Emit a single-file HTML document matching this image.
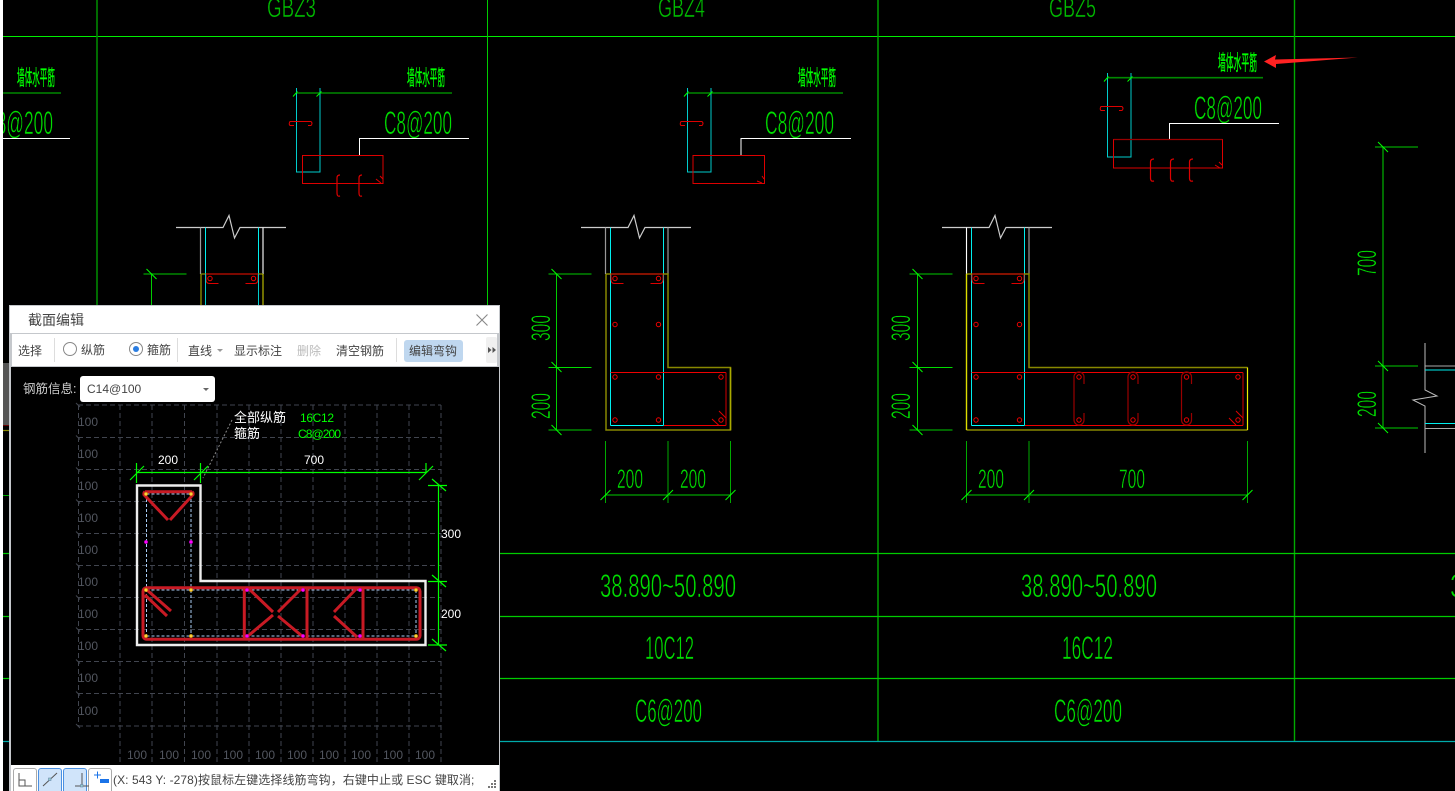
<!DOCTYPE html>
<html><head><meta charset="utf-8"><style>
html,body{margin:0;padding:0;background:#000;width:1455px;height:791px;overflow:hidden}
*{box-sizing:border-box}
#cad{position:absolute;left:0;top:0}
.cad text{font-family:"Liberation Sans","Noto Sans CJK SC",sans-serif}
#dlg{position:absolute;left:9px;top:305px;width:491px;height:486px;background:#c5c8cc;overflow:hidden}
#dlg .a{position:absolute;white-space:nowrap;font-family:"Liberation Sans","Noto Sans CJK SC",sans-serif;font-size:12px;line-height:16px;color:#444}
#body{position:absolute;left:2px;top:62px;width:488px;height:398px;background:#000}
#dsvg{position:absolute;left:0;top:0}
#dsvg text{font-family:"Liberation Sans","Noto Sans CJK SC",sans-serif}
</style></head><body>
<svg id="cad" class="cad" width="1455" height="791" viewBox="0 0 1455 791" fill="none">
<defs>
<g id="low">
<path d="M-24.5 227.5H22.5L28.5 215.5L34 238L39.5 227.5H85.5" stroke="#ccc" stroke-width="1.2"/>
<path d="M-49 274V430" stroke="#0c0"/>
<path d="M-57 274H-14M-57 430H-14" stroke="#080" stroke-width="1.6"/>
<path d="M-57 367.5H-14" stroke="#0d0"/>
<path d="M-54 269L-44 279M-54 362L-44 372M-54 425L-44 435" stroke="#0f0"/>
<path d="M5 227.5V425.5M58 227.5V425.5" stroke="#0ee" stroke-width="1"/>
<path d="M0 227.5V274M62.5 227.5V274" stroke="#999" stroke-width="1.2"/>
<path d="M18 283.5H9Q5.5 283.5 5.5 279V274M45 283.5H54Q57.5 283.5 57.5 279V274" stroke="#d00" stroke-width="1"/>
<g stroke="#e00" stroke-width="1">
<circle cx="9.5" cy="278.5" r="2.2"/><circle cx="53" cy="278.5" r="2.2"/>
<circle cx="9.5" cy="324.5" r="2.2"/><circle cx="53" cy="324.5" r="2.2"/>
<circle cx="9.5" cy="377" r="2.2"/><circle cx="53" cy="377" r="2.2"/>
<circle cx="9.5" cy="420" r="2.2"/><circle cx="53" cy="420" r="2.2"/>
</g>
<path d="M5 372.5H58" stroke="#e00" stroke-width="1"/>
<path d="M5 425.5H58" stroke="#0ff" stroke-width="1"/>
<path d="M0 441V503M62.5 441V503" stroke="#0a0" stroke-width="1"/>
<path d="M0 495H62.5" stroke="#0c0" stroke-width="1"/>
<path d="M-5 500L5 490M57.5 500L67.5 490" stroke="#0f0"/>
</g>
<g id="up">
<path d="M0 0V84H23.5V0" stroke="#0cc" stroke-width="1"/>
<path d="M-3.5 8.5L1 3.5M20 8.5L25 3.5" stroke="#0f0"/>
<path d="M-2.5 37.5H-6.5Q-8 36 -6.5 33.5H14.5Q16.5 35.5 14.5 37.5H11.5" stroke="#d00" stroke-width="1"/>
</g>
</defs>

<rect x="0" y="0" width="3" height="791" fill="#fff"/>

<!-- grid -->
<path d="M3 36.5H1455" stroke="#0e0" stroke-width="1"/>
<path d="M97 0V306" stroke="#080" stroke-width="1.6"/>
<path d="M487.5 0V306" stroke="#0c0" stroke-width="1"/>
<path d="M878 0V741M1294.5 0V741" stroke="#0a0" stroke-width="1.4"/>
<path d="M3 553.5H1455M3 616.5H1455M3 678.5H1455" stroke="#0c0" stroke-width="1.2"/>
<path d="M3 741.5H1455" stroke="#0aa" stroke-width="1.2"/>
<path d="M3 495.5H9" stroke="#0a0"/>
<path d="M3 430.5H9" stroke="#880" stroke-width="1.2"/>
<path d="M3 425H9" stroke="#c00"/>
<rect x="3" y="363" width="6" height="62" fill="#555"/>

<!-- titles -->
<g fill="#0b0" stroke="#000" stroke-width="0.5">
<text x="267" y="17" font-size="28" textLength="49" lengthAdjust="spacingAndGlyphs">GBZ3</text>
<text x="658" y="17" font-size="28" textLength="47" lengthAdjust="spacingAndGlyphs">GBZ4</text>
<text x="1049" y="17" font-size="28" textLength="47" lengthAdjust="spacingAndGlyphs">GBZ5</text>
</g>

<!-- upper details -->
<g fill="#0f0" stroke="#0f0" stroke-width="0.35" font-size="21">
<text x="17" y="85" textLength="38" lengthAdjust="spacingAndGlyphs">墙体水平筋</text>
<text x="407" y="85" textLength="38" lengthAdjust="spacingAndGlyphs">墙体水平筋</text>
<text x="798" y="85" textLength="38" lengthAdjust="spacingAndGlyphs">墙体水平筋</text>
<text x="1218" y="70" textLength="39" lengthAdjust="spacingAndGlyphs">墙体水平筋</text>
</g>
<g fill="#0d0" stroke="#000" stroke-width="0.6" font-size="32">
<text x="384" y="134" textLength="68" lengthAdjust="spacingAndGlyphs">C8@200</text>
<text x="765" y="134" textLength="69" lengthAdjust="spacingAndGlyphs">C8@200</text>
<text x="1194" y="119" textLength="68" lengthAdjust="spacingAndGlyphs">C8@200</text>
<text x="-3.4" y="134" textLength="56.4" lengthAdjust="spacingAndGlyphs">8@200</text>
</g>
<rect x="0" y="100" width="3" height="40" fill="#fff"/>
<path d="M3 93H61M296 93H452M687 93H843" stroke="#080" stroke-width="1.6"/>
<path d="M1107 77.7H1263" stroke="#080" stroke-width="1.6"/>
<path d="M3 138.5H70M469 138.5H359.5V155M851 138.5H741V155M1279 123.5H1169.5V139.5" stroke="#fff" stroke-width="1"/>
<use href="#up" x="296.5" y="88"/>
<use href="#up" x="687.5" y="88"/>
<use href="#up" x="1107.5" y="73"/>
<!-- red rects -->
<path d="M302.5 155.5H383V183.5H302.5Z" stroke="#d00" stroke-width="1"/>
<path d="M693 155.5H764.5V183.5H693Z" stroke="#d00" stroke-width="1"/>
<path d="M1113.5 139.5H1222.5V168H1113.5Z" stroke="#d00" stroke-width="1"/>
<path d="M1113.5 139.5H1222.5" stroke="#900" stroke-width="1.2"/>
<path d="M376 179L381 183M380 176L383 179M757 181L762 183M762 176L764 179M1215 165L1220 168M1219 162L1222 165" stroke="#d00" stroke-width="1"/>
<g stroke="#d00" stroke-width="1.2">
<path d="M340 175Q337 175 337 178V193Q337 197 340 196"/>
<path d="M362 175Q359 175 359 178V193Q359 197 362 196"/>
<path d="M1154 159Q1150.5 159 1150.5 162V178Q1150.5 182 1154 181"/>
<path d="M1174 159Q1170.5 159 1170.5 162V178Q1170.5 182 1174 181"/>
<path d="M1193 159Q1189.5 159 1189.5 162V178Q1189.5 182 1193 181"/>
</g>
<!-- arrow -->
<path d="M1264 61.5L1276 55L1275 59.5L1358 57.5L1276 64L1276 68Z" fill="#f22"/>

<!-- lower GBZ3 -->
<use href="#low" x="200.5"/>
<path d="M263 227.5V274" stroke="#fff"/>
<path d="M201 274V306" stroke="#880" stroke-width="1.4"/>
<path d="M201 274H263" stroke="#880" stroke-width="1.2"/>
<path d="M263 274V306" stroke="#dd0" stroke-width="1"/>
<path d="M205.5 274V306M258.5 274V306" stroke="#0cc" stroke-width="1"/>
<path d="M206 274H258" stroke="#900" stroke-width="1.6"/>

<!-- lower GBZ4 -->
<use href="#low" x="605.5"/>
<path d="M606 274V430H730.5V367.5H668V274H606" stroke="#880" stroke-width="1.5"/>
<path d="M730.5 367.5V430" stroke="#aa0" stroke-width="1.5"/>
<path d="M611 274H663" stroke="#900" stroke-width="1.6"/>
<path d="M663 372.5H726M664 425.5H726" stroke="#e00" stroke-width="1"/>
<path d="M726 372.5V425.5" stroke="#900" stroke-width="1.4"/>
<path d="M712 419L719 425.5M719 411L726 418" stroke="#d00" stroke-width="1"/>
<path d="M730.5 441V503" stroke="#0a0"/>
<path d="M668 495H730.5" stroke="#0c0"/>
<path d="M725.5 500L735.5 490" stroke="#0f0"/>
<g stroke="#e00"><circle cx="721" cy="377" r="2.2"/><circle cx="721" cy="420" r="2.2"/></g>

<!-- lower GBZ5 -->
<use href="#low" x="966.5"/>
<path d="M966.5 227.5V274" stroke="#fff"/>
<path d="M966.5 274H1029V367.5H1247.5M966.5 430H1247.5" stroke="#880" stroke-width="1.5"/>
<path d="M966.5 274V430" stroke="#dd0" stroke-width="1.4"/>
<path d="M1247.5 367.5V430" stroke="#ee0" stroke-width="1.2"/>
<path d="M972 274H1024" stroke="#900" stroke-width="1.6"/>
<path d="M1024 372.5H1243M1025 425.5H1243" stroke="#e00" stroke-width="1"/>
<path d="M1243 372.5V425.5" stroke="#b00" stroke-width="1.2"/>
<path d="M1229 418L1236 425M1236 411L1243 418" stroke="#d00" stroke-width="1"/>
<path d="M1247.5 441V503" stroke="#0a0"/>
<path d="M1029 495H1247.5" stroke="#0c0"/>
<path d="M1242.5 500L1252.5 490" stroke="#0f0"/>
<g stroke="#900" stroke-width="1.2">
<path d="M1084 384V377a5 5 0 0 0 -10 0V420a5 5 0 0 0 10 0V413"/>
<path d="M1138 384V377a5 5 0 0 0 -10 0V420a5 5 0 0 0 10 0V413"/>
<path d="M1191.5 384V377a5 5 0 0 0 -10 0V420a5 5 0 0 0 10 0V413"/>
</g>
<g stroke="#e00"><circle cx="1079" cy="377" r="2.2"/><circle cx="1079" cy="420" r="2.2"/><circle cx="1133" cy="377" r="2.2"/><circle cx="1133" cy="420" r="2.2"/><circle cx="1186.5" cy="377" r="2.2"/><circle cx="1186.5" cy="420" r="2.2"/><circle cx="1238" cy="377" r="2.2"/><circle cx="1238" cy="420" r="2.2"/></g>

<!-- dim text -->
<g fill="#0d0" stroke="#000" stroke-width="0.5" font-size="27">
<text transform="translate(550,341) rotate(-90)" textLength="26" lengthAdjust="spacingAndGlyphs">300</text>
<text transform="translate(550,419) rotate(-90)" textLength="26" lengthAdjust="spacingAndGlyphs">200</text>
<text transform="translate(910,341) rotate(-90)" textLength="26" lengthAdjust="spacingAndGlyphs">300</text>
<text transform="translate(910,419) rotate(-90)" textLength="26" lengthAdjust="spacingAndGlyphs">200</text>
<text transform="translate(1376,276) rotate(-90)" textLength="26" lengthAdjust="spacingAndGlyphs">700</text>
<text transform="translate(1376,417) rotate(-90)" textLength="26" lengthAdjust="spacingAndGlyphs">200</text>
<text x="617" y="488" textLength="26" lengthAdjust="spacingAndGlyphs">200</text>
<text x="680" y="488" textLength="26" lengthAdjust="spacingAndGlyphs">200</text>
<text x="978" y="488" textLength="26" lengthAdjust="spacingAndGlyphs">200</text>
<text x="1119" y="488" textLength="26" lengthAdjust="spacingAndGlyphs">700</text>
</g>

<!-- right part -->
<path d="M1383 147V428" stroke="#080" stroke-width="1.6"/>
<path d="M1375 147H1418M1375 366H1418M1375 428H1418" stroke="#0c0"/>
<path d="M1378 142L1388 152M1378 361L1388 371M1378 423L1388 433" stroke="#0f0"/>
<path d="M1425 343V390L1437 396L1413 400L1425 406V453" stroke="#bbb" stroke-width="1"/>
<path d="M1425 366H1455M1425 428.5H1455" stroke="#aaa"/>
<path d="M1425 370H1455M1425 423.5H1455" stroke="#0ee"/>

<!-- table text -->
<g fill="#0d0" stroke="#000" stroke-width="0.6" font-size="32">
<text x="600" y="597" textLength="136" lengthAdjust="spacingAndGlyphs">38.890~50.890</text>
<text x="1021" y="597" textLength="136" lengthAdjust="spacingAndGlyphs">38.890~50.890</text>
<text x="1450" y="597" textLength="14" lengthAdjust="spacingAndGlyphs">3</text>
<text x="645" y="659" textLength="49" lengthAdjust="spacingAndGlyphs">10C12</text>
<text x="1062" y="659" textLength="51" lengthAdjust="spacingAndGlyphs">16C12</text>
<text x="635" y="722" textLength="67" lengthAdjust="spacingAndGlyphs">C6@200</text>
<text x="1054" y="722" textLength="68" lengthAdjust="spacingAndGlyphs">C6@200</text>
</g>
</svg>

<div id="dlg">
  <div style="position:absolute;left:1px;top:1px;width:489px;height:27px;background:#fff"></div>
  <div class="a" style="left:19px;top:7px;font-size:14px;line-height:16px;color:#444">截面编辑</div>
  <svg style="position:absolute;left:466px;top:8px" width="14" height="14" fill="none"><path d="M1.5 1.5L12.5 12.5M12.5 1.5L1.5 12.5" stroke="#888" stroke-width="1.1"/></svg>

  <div style="position:absolute;left:3px;top:29px;width:485px;height:32px;background:#fff"></div>
  <div class="a" style="left:9px;top:38px">选择</div>
  <div style="position:absolute;left:45px;top:33px;width:1px;height:24px;background:#ddd"></div>
  <div style="position:absolute;left:54px;top:37px;width:14px;height:14px;border:1px solid #888;border-radius:50%;background:#fff"></div>
  <div class="a" style="left:72px;top:37px">纵筋</div>
  <div style="position:absolute;left:120px;top:37px;width:14px;height:14px;border:1px solid #888;border-radius:50%;background:#fff"></div>
  <div style="position:absolute;left:124px;top:41px;width:6px;height:6px;border-radius:50%;background:#2a7de1"></div>
  <div class="a" style="left:138px;top:37px">箍筋</div>
  <div style="position:absolute;left:168px;top:33px;width:1px;height:24px;background:#ddd"></div>
  <div class="a" style="left:179px;top:38px">直线</div>
  <div style="position:absolute;left:208px;top:44px;width:0;height:0;border:3px solid transparent;border-top:3px solid #999"></div>
  <div class="a" style="left:225px;top:38px">显示标注</div>
  <div class="a" style="left:288px;top:38px;color:#bbb">删除</div>
  <div class="a" style="left:327px;top:38px">清空钢筋</div>
  <div style="position:absolute;left:387px;top:33px;width:1px;height:24px;background:#ddd"></div>
  <div style="position:absolute;left:395px;top:35px;width:59px;height:22px;background:#bfd7ef;border-radius:3px"></div>
  <div class="a" style="left:400px;top:38px">编辑弯钩</div>
  <div style="position:absolute;left:477px;top:32px;width:11px;height:26px;background:#f0f0f0;border-radius:2px"></div>
  <svg style="position:absolute;left:478px;top:41px" width="10" height="8"><path d="M1 1L4.5 4L1 7ZM5.5 1L9 4L5.5 7Z" fill="#555"/></svg>

  <div id="body">
  <svg id="dsvg" width="488" height="398" viewBox="11 367 488 398" fill="none">
    <g stroke="#41454f" stroke-width="1" stroke-dasharray="5 3">
      <path d="M120 405V765M152 405V765M184.5 405V765M217 405V765M249 405V765M281 405V765M313 405V765M345 405V765M377 405V765M409 405V765M441 405V765"/>
      <path d="M78 405H441M78 437.5H441M78 469.5H441M78 501.5H441M78 533.5H441M78 565.5H441M78 597.5H441M78 629.5H441M78 661.5H441M78 693.5H441M78 726H441"/>
      <path d="M78.5 405V726"/>
    </g>
    <path d="M76 403L80 407M76 435.5L80 439.5M76 467.5L80 471.5M76 499.5L80 503.5M76 531.5L80 535.5M76 563.5L80 567.5M76 595.5L80 599.5M76 627.5L80 631.5M76 659.5L80 663.5M76 691.5L80 695.5M76 724L80 728" stroke="#41454f"/>
    <g fill="#52565f" font-size="12">
      <text x="78" y="426">100</text><text x="78" y="458">100</text><text x="78" y="490">100</text><text x="78" y="522">100</text><text x="78" y="554">100</text><text x="78" y="586">100</text><text x="78" y="618">100</text><text x="78" y="650">100</text><text x="78" y="682">100</text><text x="78" y="715">100</text>
      <text x="127" y="759">100</text><text x="159" y="759">100</text><text x="191" y="759">100</text><text x="223" y="759">100</text><text x="255" y="759">100</text><text x="287" y="759">100</text><text x="319" y="759">100</text><text x="351" y="759">100</text><text x="383" y="759">100</text><text x="415" y="759">100</text>
    </g>
    <path d="M232 420L203 478" stroke="#888" stroke-dasharray="2 2"/>
    <g fill="#fff" font-size="13">
      <text x="234" y="422">全部纵筋</text><text x="234" y="438">箍筋</text>
    </g>
    <g fill="#fff" font-size="12">
      <text x="158" y="464">200</text><text x="304" y="464">700</text><text x="441" y="538">300</text><text x="441" y="618">200</text>
    </g>
    <g fill="#0f0" font-size="12">
      <text x="300" y="422" textLength="34">16C12</text><text x="298" y="438" textLength="43">C8@200</text>
    </g>
    <g stroke="#0f0" stroke-width="1.2">
      <path d="M136.5 472.5H426M136.5 463V483M200.5 463V483M426 463V472M130 480L144 466M194 480L208 466M419 480L433 466"/>
      <path d="M438.5 485V645M428 485.5H447M428 581.5H447M428 645H447M432 479L446 491M432 575L446 587M432 639L446 651"/>
    </g>
    <path d="M137 485.5H200.5V581H425.5V645H137Z" stroke="#eee" stroke-width="2.4"/>
    <path d="M146.5 494H191M146.5 494V636M191 494V590M146.5 590H416M146.5 636H416M416 590V636M191 590V636" stroke="#a9cdf5" stroke-dasharray="3 2"/>
    <g stroke="#c81a24" stroke-width="3" stroke-linecap="butt">
      <path d="M145 491.7H192M145 491.7a3 3 0 0 0 -1 3L168 520M192 491.7a3 3 0 0 1 1 3L170 520"/>
      <rect x="143" y="587.7" width="277" height="51.5" rx="3.5"/>
      <path d="M147 590L171 611M145 595L167 616"/>
      <path d="M244.3 587V639M307 587V639M363 587V639"/>
      <path d="M248 588L273 612M302 588L278 612M248 636L273 615M302 636L278 616M357 588L334 612M357 637L334 616"/>
    </g>
    <g fill="#ffd23a" stroke="#d8a010" stroke-width="0.6">
      <circle cx="146" cy="494" r="1.6"/><circle cx="191" cy="494" r="1.6"/><circle cx="146" cy="590" r="1.6"/><circle cx="191" cy="590" r="1.6"/><circle cx="416" cy="590" r="1.6"/><circle cx="146" cy="636" r="1.6"/><circle cx="191" cy="636" r="1.6"/><circle cx="416" cy="636" r="1.6"/>
    </g>
    <g fill="#f0f" stroke="#c0c" stroke-width="0.6">
      <circle cx="146" cy="542" r="1.6"/><circle cx="191" cy="542" r="1.6"/><circle cx="247" cy="590" r="1.6"/><circle cx="303" cy="590" r="1.6"/><circle cx="360" cy="590" r="1.6"/><circle cx="247" cy="636" r="1.6"/><circle cx="303" cy="636" r="1.6"/><circle cx="360" cy="636" r="1.6"/>
    </g>
  </svg>
  </div>

  <div class="a" style="left:14px;top:76px;color:#cfcfcf;font-size:12.5px">钢筋信息:</div>
  <div style="position:absolute;left:71px;top:71px;width:135px;height:26px;background:#fff;border-radius:3px"></div>
  <div class="a" style="left:78px;top:76px;font-size:12px;color:#444">C14@100</div>
  <div style="position:absolute;left:194px;top:83px;width:0;height:0;border:3px solid transparent;border-top:3px solid #666"></div>

  <div style="position:absolute;left:2px;top:460px;width:488px;height:26px;background:#fff"></div>
  <div style="position:absolute;left:4px;top:463px;width:24px;height:26px;background:#fff;border:1px solid #aaa;border-radius:3px"></div>
  <div style="position:absolute;left:29px;top:463px;width:24px;height:26px;background:#d0e4fa;border:1px solid #4a90e2;border-radius:3px"></div>
  <div style="position:absolute;left:54px;top:463px;width:24px;height:26px;background:#d0e4fa;border:1px solid #4a90e2;border-radius:3px"></div>
  <div style="position:absolute;left:79px;top:463px;width:24px;height:26px;background:#fff;border:1px solid #aaa;border-radius:3px"></div>
  <svg style="position:absolute;left:4px;top:463px" width="100" height="23" fill="none">
    <path d="M6 5V18H19M6 12H12V18" stroke="#555"/>
    <path d="M30 18L44 5" stroke="#555"/><rect x="35.5" y="10" width="2.5" height="2.5" fill="#9cc" stroke="#68a" stroke-width=".6"/>
    <path d="M62 18H76M69 5V18" stroke="#555"/><rect x="67.5" y="16.5" width="2.5" height="2.5" fill="#9cc" stroke="#68a" stroke-width=".6"/>
    <path d="M81 7H88M84.5 3.5V10.5" stroke="#1a73e8"/><rect x="87" y="11" width="9" height="4" fill="#1a73e8"/>
  </svg>
  <div class="a" style="left:104px;top:467px;font-size:12px;letter-spacing:.07px;color:#444">(X: 543 Y: -278)按鼠标左键选择线筋弯钩，右键中止或 ESC 键取消;</div>
  <svg style="position:absolute;left:478px;top:475px" width="10" height="10"><path d="M7 0h2v2h-2zM4 3h2v2h-2zM7 3h2v2h-2zM1 6h2v2h-2zM4 6h2v2h-2zM7 6h2v2h-2z" fill="#777"/></svg>
</div>
</body></html>
